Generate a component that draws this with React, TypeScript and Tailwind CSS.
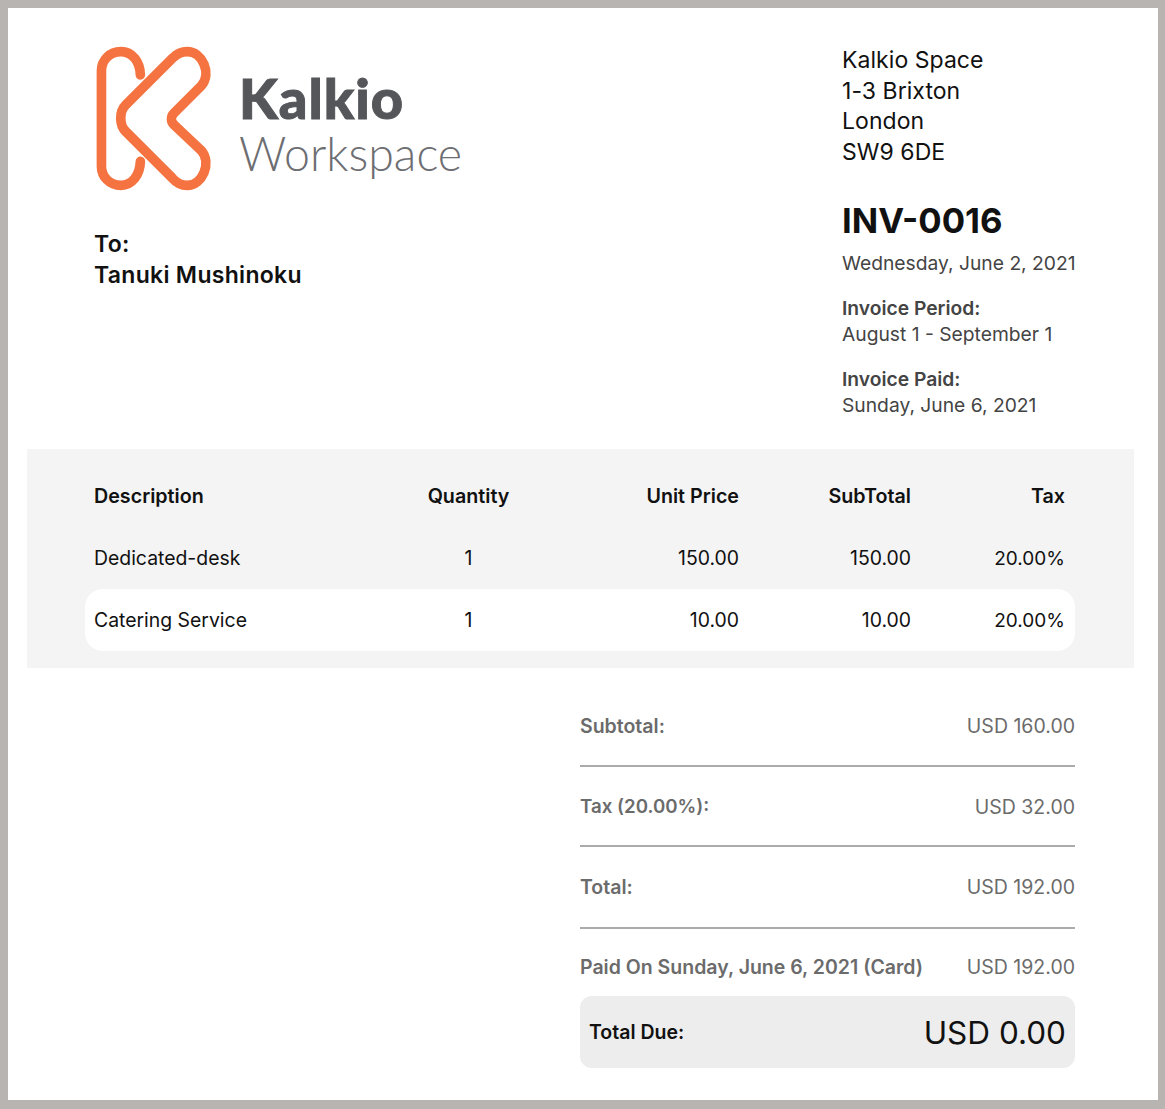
export default function App() {
  const rows = [
    ["Dedicated-desk", "1", "150.00", "150.00", "20.00%"],
    ["Catering Service", "1", "10.00", "10.00", "20.00%"],
  ];
  const cols = "grid grid-cols-[333px_83px_229px_172px_154px] items-center";
  return (
    <div className="w-[1165px] h-[1109px] bg-[#b8b4b2] p-2 overflow-hidden font-['Inter',sans-serif]">
      <div className="w-[1150px] h-[1092px] bg-white flex flex-col">
        <div className="flex h-[441px]">
          <div className="w-[834px] flex flex-col pl-[86px] pt-[37px]">
            <div className="flex items-start">
              <svg className="w-[120px] h-[148px] shrink-0" viewBox="40 45 360 445" fill="none" stroke="#f47340" strokeWidth="29" strokeLinecap="round" strokeLinejoin="round">
                <path d="M179 135C178 95 155 65 120 65C88 65 62 90 62 123V410C62 442 88 467 120 467C155 467 178 435 179 395" />
                <path d="M280 250L362 168C395 130 365 65 320 65C300 65 288 72 275 85L135 225C115 245 115 285 135 305L275 445C288 460 300 467 320 467C365 467 395 400 362 362L280 285C270 275 270 260 280 250Z" />
              </svg>
              <div className="ml-[25px] mt-[26px] flex flex-col font-['Lato',sans-serif] text-[#55565a]">
                <div className="text-[56px] h-[54px] leading-[54px] font-black tracking-[1px] [-webkit-text-stroke:1px_#55565a]">Kalkio</div>
                <div className="mt-[5px] text-[46.5px] h-[46px] leading-[46px] font-light text-[#6d6e72]">Workspace</div>
              </div>
            </div>
            <div className="mt-[36px] text-[23px] leading-[31px] font-semibold text-[#111] tracking-[0.3px]">
              <div>To:</div>
              <div>Tanuki Mushinoku</div>
            </div>
          </div>
          <div className="pt-[37px] flex flex-col">
            <div className="text-[23px] leading-[30.7px] text-[#111] tracking-[0.05px]">
              <div>Kalkio Space</div>
              <div>1-3 Brixton</div>
              <div>London</div>
              <div>SW9 6DE</div>
            </div>
            <div className="mt-[32px] text-[34.7px] leading-[40px] font-bold text-[#111]">INV-0016</div>
            <div className="mt-[10px] text-[19.25px] leading-[26px] text-[#444]">Wednesday, June 2, 2021</div>
            <div className="mt-[19px] text-[19.25px] leading-[26px] text-[#444]">
              <div className="font-semibold">Invoice Period:</div>
              <div>August 1 - September 1</div>
            </div>
            <div className="mt-[19px] text-[19.25px] leading-[26px] text-[#444]">
              <div className="font-semibold">Invoice Paid:</div>
              <div>Sunday, June 6, 2021</div>
            </div>
          </div>
        </div>
        <div className="ml-[19px] w-[1107px] h-[219px] bg-[#f4f4f4] pl-[58px] pt-[17px]">
          <div className={`${cols} h-[61px] pl-[9px] text-[19.7px] font-semibold text-[#111]`}>
            <div>Description</div>
            <div className="text-center">Quantity</div>
            <div className="text-right">Unit Price</div>
            <div className="text-right">SubTotal</div>
            <div className="text-right">Tax</div>
          </div>
          {rows.map((r, i) => (
            <div key={r[0]} className={`${cols} w-[990px] h-[62px] pl-[9px] pt-[2px] text-[19.4px] text-[#111] rounded-[18px] ${i === 1 ? "bg-white" : ""}`}>
              <div>{r[0]}</div>
              <div className="text-center">{r[1]}</div>
              <div className="text-right">{r[2]}</div>
              <div className="text-right">{r[3]}</div>
              <div className="text-right text-[19px]">{r[4]}</div>
            </div>
          ))}
        </div>
        <div className="ml-[572px] w-[495px] mt-[38px] text-[19.5px] text-[#6b6b6b]">
          <div className="flex justify-between items-start h-[61px] mb-[20px] leading-[40px] border-b-2 border-[#ababab]">
            <span className="font-semibold">Subtotal:</span>
            <span>USD 160.00</span>
          </div>
          <div className="flex justify-between items-start h-[60px] mb-[20px] leading-[40px] border-b-2 border-[#ababab]">
            <span className="font-semibold text-[18.7px]">Tax (20.00%):</span>
            <span>USD 32.00</span>
          </div>
          <div className="flex justify-between items-start h-[62px] mb-[18px] leading-[40px] border-b-2 border-[#ababab]">
            <span className="font-semibold">Total:</span>
            <span>USD 192.00</span>
          </div>
          <div className="flex justify-between h-[49px] leading-[40px]">
            <span className="font-semibold">Paid On Sunday, June 6, 2021 (Card)</span>
            <span>USD 192.00</span>
          </div>
          <div className="flex justify-between items-center h-[72px] bg-[#ededed] rounded-[12px] px-[9px] pt-[2px] text-[#111]">
            <span className="font-semibold">Total Due:</span>
            <span className="text-[31.5px]">USD 0.00</span>
          </div>
        </div>
      </div>
    </div>
  );
}
